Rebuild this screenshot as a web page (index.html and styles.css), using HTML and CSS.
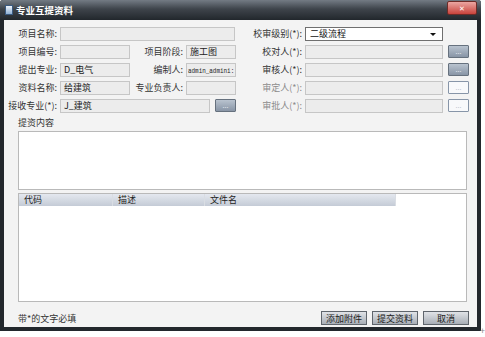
FILE: index.html
```html
<!DOCTYPE html>
<html>
<head>
<meta charset="utf-8">
<link rel="stylesheet" href="styles.css">
</head>
<body>
<div class="window">
  <div class="titlebar">
    <span class="ticon"></span>
    <span class="ttext">专业互提资料</span>
    <span class="close">✕</span>
  </div>
  <div class="content">
    <div class="form">
      <div class="col left">
        <div class="row">
          <span class="lbl w1">项目名称:</span><span class="inp w175"></span>
        </div>
        <div class="row">
          <span class="lbl w1">项目编号:</span><span class="inp w70"></span>
          <span class="lbl w2">项目阶段:</span><span class="inp w50">施工图</span>
        </div>
        <div class="row">
          <span class="lbl w1">提出专业:</span><span class="inp w70">D_电气</span>
          <span class="lbl w2">编制人:</span><span class="inp w50 tight"><span class="mono">admin_admini:</span></span>
        </div>
        <div class="row">
          <span class="lbl w1">资料名称:</span><span class="inp w70">给建筑</span>
          <span class="lbl w2">专业负责人:</span><span class="inp w50"></span>
        </div>
        <div class="row">
          <span class="lbl w1 wide">接收专业(*):</span><span class="inp w150">J_建筑</span>
          <span class="btn dots dark">...</span>
        </div>
      </div>
      <div class="col right">
        <div class="row">
          <span class="lbl w3">校审级别(*):</span><span class="select">二级流程<span class="arrow"></span></span>
        </div>
        <div class="row">
          <span class="lbl w3">校对人(*):</span><span class="inp w138"></span><span class="btn dots dark">...</span>
        </div>
        <div class="row">
          <span class="lbl w3">审核人(*):</span><span class="inp w138"></span><span class="btn dots dark">...</span>
        </div>
        <div class="row">
          <span class="lbl w3 dim">审定人(*):</span><span class="inp w138"></span><span class="btn dots light">...</span>
        </div>
        <div class="row">
          <span class="lbl w3 dim">审批人(*):</span><span class="inp w138"></span><span class="btn dots light">...</span>
        </div>
      </div>
    </div>
    <div class="section">提资内容</div>
    <div class="textarea"></div>
    <div class="table">
      <div class="thead">
        <span class="th c1">代码</span>
        <span class="th c2">描述</span>
        <span class="th c3">文件名</span>
        <span class="th c4"></span>
      </div>
    </div>
    <div class="footer">
      <span class="note">带*的文字必填</span>
      <span class="fbtn">添加附件</span>
      <span class="fbtn">提交资料</span>
      <span class="fbtn">取消</span>
    </div>
  </div>
</div>
<span class="cursor">+</span>
</body>
</html>
```
FILE: styles.css
```css
html, body {
  margin: 0;
  padding: 0;
  background: #ffffff;
  width: 485px;
  height: 337px;
  overflow: hidden;
  font-family: "Noto Sans CJK SC", "DejaVu Sans", sans-serif;
  font-size: 9px;
  color: #333;
}
.window {
  position: relative;
  width: 481px;
  height: 331px;
  box-sizing: border-box;
  background: #22272c;
  padding: 0 4px 4px 4px;
  display: flex;
  flex-direction: column;
  border-radius: 3px 3px 0 0;
}
.titlebar {
  flex-shrink: 0;
  height: 20px;
  display: flex;
  align-items: center;
  background: linear-gradient(#737b84 0%, #3e444b 45%, #22272c 100%);
  margin: 0 -4px;
  padding: 0 4px;
  border-radius: 3px 3px 0 0;
}
.ticon {
  width: 6px;
  height: 8px;
  background: linear-gradient(#eef3fa, #8fb0d4);
  border: 1px solid #3a5a80;
  margin-left: 1px;
  margin-right: 3px;
}
.ttext {
  color: #fff;
  font-weight: bold;
  font-size: 9.5px;
  flex: 1;
}
.close {
  width: 28px;
  height: 12px;
  margin-top: -5px;
  background: linear-gradient(#eba6a2, #c9433c);
  border: 1px solid #6e2b27;
  border-radius: 2px;
  color: #fff;
  font-size: 7px;
  font-weight: bold;
  display: flex;
  align-items: center;
  justify-content: center;
}
.content {
  flex: 1;
  min-height: 0;
  background: #f3f3f3;
  display: flex;
  flex-direction: column;
  padding: 6px 10px 0 14px;
}
.form {
  display: flex;
  height: 87px;
  flex-shrink: 0;
}
.col {
  display: flex;
  flex-direction: column;
  gap: 3px;
}
.col.left { width: 222px; flex-shrink: 0; }
.col.right { width: 240px; flex-shrink: 0; }
.row {
  display: flex;
  align-items: center;
  height: 15px;
}
.lbl {
  text-align: right;
  padding-right: 3px;
  box-sizing: border-box;
  white-space: nowrap;
  color: #333;
  flex-shrink: 0;
}
.lbl.dim { color: #8c8c8c; }
.w1 { width: 42px; }
.w1.wide { margin-left: -12px; width: 54px; }
.w2 { width: 56px; }
.w3 { width: 65px; }
.inp {
  flex-shrink: 0;
  height: 14px;
  box-sizing: border-box;
  background: #ececec;
  border: 1px solid #c6c6c6;
  padding: 0 3px;
  line-height: 12px;
  color: #222;
  overflow: hidden;
  white-space: nowrap;
}
.inp.tight { padding: 0 1px; }
.mono {
  display: inline-block;
  font-family: "Liberation Mono", monospace;
  font-size: 8px;
  transform: scaleX(0.74);
  transform-origin: left center;
}
.w175 { width: 175px; }
.w70 { width: 70px; }
.w50 { width: 50px; }
.w150 { width: 150px; }
.w138 { width: 138px; }
.select {
  flex-shrink: 0;
  position: relative;
  width: 138px;
  height: 14px;
  box-sizing: border-box;
  background: #fff;
  border: 1px solid #6f6f6f;
  padding: 0 4px;
  line-height: 12px;
  color: #111;
}
.arrow {
  position: absolute;
  right: 6px;
  top: 5px;
  width: 0;
  height: 0;
  border-left: 3px solid transparent;
  border-right: 3px solid transparent;
  border-top: 3px solid #111;
}
.btn.dots {
  flex-shrink: 0;
  width: 21px;
  height: 13px;
  box-sizing: border-box;
  margin-left: 5px;
  display: flex;
  align-items: center;
  justify-content: center;
  font-size: 7px;
  line-height: 1;
  border-radius: 1px;
}
.btn.dark {
  background: linear-gradient(#b9c3cf, #8895a6);
  border: 1px solid #66717e;
  color: #e8edf3;
}
.btn.light {
  background: #f8f9fb;
  border: 1px solid #8795a8;
  color: #b8c0cc;
}
.section {
  flex-shrink: 0;
  margin-top: 3px;
  height: 14px;
  line-height: 14px;
}
.textarea {
  flex-shrink: 0;
  margin-top: 1px;
  height: 59px;
  background: #fff;
  border: 1px solid #b9b9b9;
  width: 449px;
  box-sizing: border-box;
}
.table {
  flex-shrink: 0;
  margin-top: 3px;
  height: 109px;
  background: #fff;
  border: 1px solid #b9b9b9;
  width: 449px;
  box-sizing: border-box;
}
.thead {
  display: flex;
  height: 12px;
}
.th {
  height: 12px;
  line-height: 12px;
  background: linear-gradient(#e4e8ef, #c4cbd6);
  border-right: 1px solid #d9dde3;
  padding-left: 5px;
  box-sizing: border-box;
  color: #222;
}
.c1 { width: 94px; }
.c2 { width: 92px; }
.c3 { width: 191px; }
.c4 { flex: 1; background: #fff; border: none; }
.footer {
  flex-shrink: 0;
  display: flex;
  align-items: center;
  height: 14px;
  margin-top: 9px;
  margin-right: -2px;
}
.note { flex: 1; }
.fbtn {
  width: 46px;
  height: 14px;
  box-sizing: border-box;
  margin-left: 5px;
  background: linear-gradient(#e0e3e7, #a8aeb6);
  border: 1px solid #5f656c;
  display: flex;
  align-items: center;
  justify-content: center;
  color: #222;
}
.cursor {
  position: absolute;
  left: 480px;
  top: 324px;
  font-size: 9px;
  color: #888;
}
```
